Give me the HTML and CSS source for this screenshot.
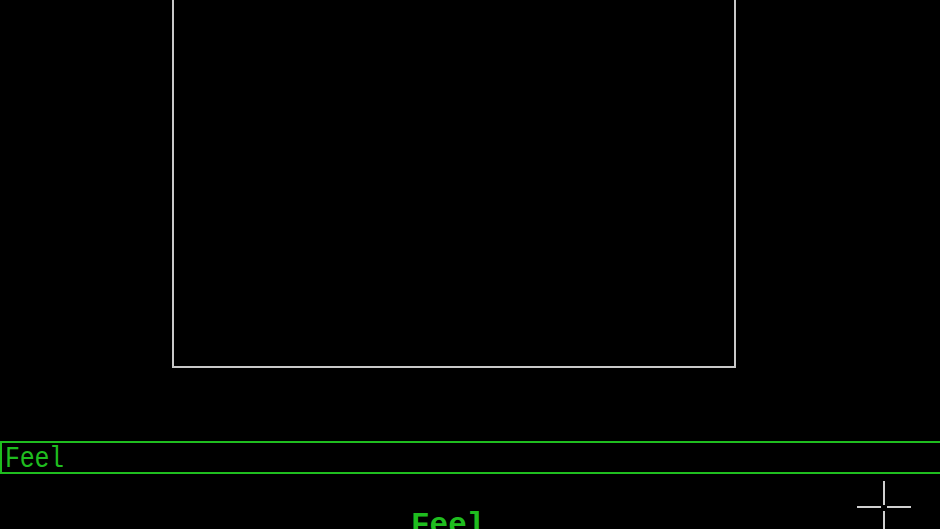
FILE: index.html
```html
<!DOCTYPE html>
<html>
<head>
<meta charset="utf-8">
<link rel="stylesheet" href="styles.css">
</head>
<body>
<div class="screen">
  <div class="canvas-frame"></div>
  <div class="input-bar"><span class="input-text">Feel</span></div>
  <div class="status"><span class="status-text">Feel</span></div>
  <div class="cursor">
    <span class="cross-v top"></span>
    <span class="cross-v bottom"></span>
    <span class="cross-h left"></span>
    <span class="cross-h right"></span>
  </div>
</div>
</body>
</html>
```

FILE: styles.css
```css
html, body {
  margin: 0;
  padding: 0;
  background: #000;
  overflow: hidden;
}
.screen {
  position: relative;
  width: 940px;
  height: 529px;
  overflow: hidden;
  display: flex;
  flex-direction: column;
  background: #000;
  font-family: "Liberation Mono", "DejaVu Sans Mono", monospace;
}
.canvas-frame {
  margin-left: 172px;
  width: 560px;
  height: 366px;
  border: 2px solid #c8c8c8;
  border-top: none;
  flex: none;
}
.input-bar {
  margin-top: 73px;
  width: 960px;
  height: 29px;
  border: 2px solid #1fbd1f;
  flex: none;
  display: flex;
  align-items: center;
  overflow: hidden;
}
.input-text {
  color: #1fbd1f;
  font-size: 25px;
  line-height: 29px;
  margin-left: 3px;
  display: inline-block;
  transform: translateY(2px) scaleY(1.2);
  transform-origin: left center;
  letter-spacing: -0.3px;
}
.status {
  padding-left: 411px;
  padding-top: 40px;
  flex: none;
}
.status-text {
  display: inline-block;
  color: #1fbd1f;
  font-size: 31px;
  line-height: 24px;
  font-weight: bold;
}
.cursor {
  position: absolute;
  left: 857px;
  top: 481px;
  width: 54px;
  height: 54px;
}
.cross-v, .cross-h {
  position: absolute;
  background: #d0d0d0;
}
.cross-v {
  left: 26px;
  width: 2px;
  height: 24px;
}
.cross-v.top { top: 0; }
.cross-v.bottom { top: 30px; }
.cross-h {
  top: 25px;
  height: 2px;
  width: 24px;
}
.cross-h.left { left: 0; }
.cross-h.right { left: 30px; }
```
